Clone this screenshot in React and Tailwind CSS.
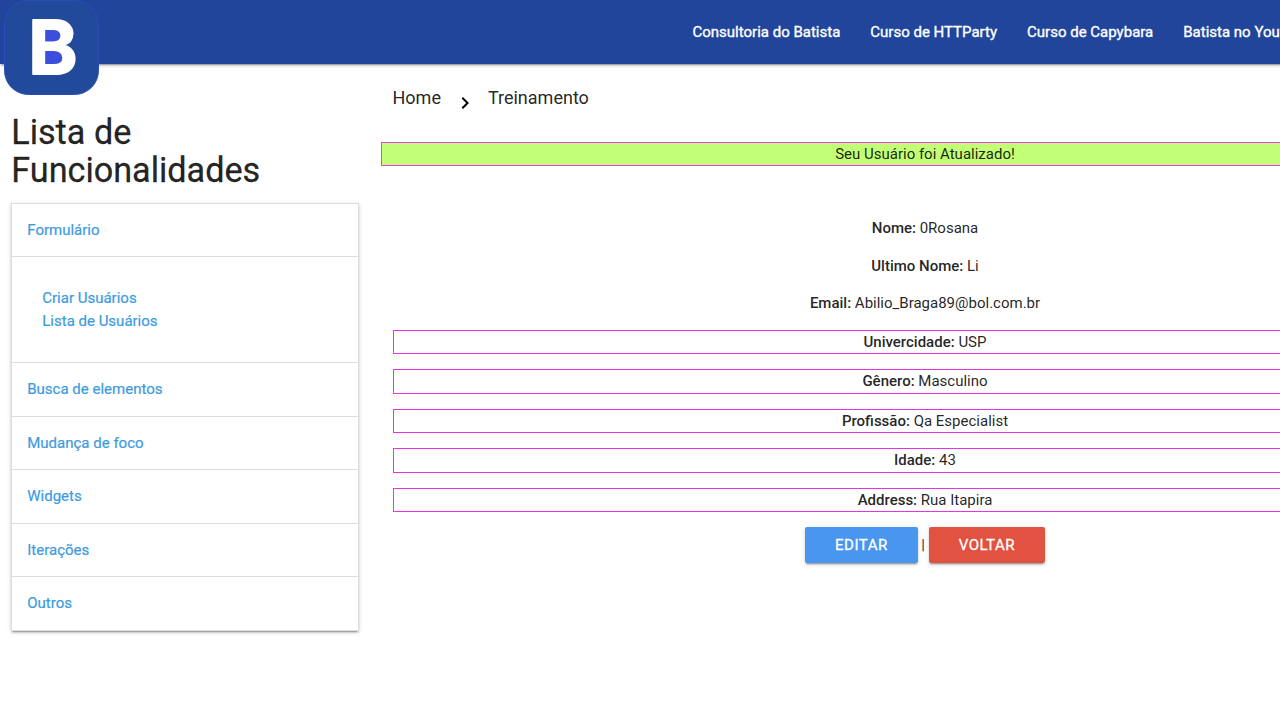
const navLinks = ["Consultoria do Batista", "Curso de HTTParty", "Curso de Capybara", "Batista no You"];

const menu = [
  { title: "Formulário", links: ["Criar Usuários", "Lista de Usuários"] },
  { title: "Busca de elementos" },
  { title: "Mudança de foco" },
  { title: "Widgets" },
  { title: "Iterações" },
  { title: "Outros" },
];

const fields = [
  { label: "Nome:", value: "0Rosana" },
  { label: "Ultimo Nome:", value: "Li" },
  { label: "Email:", value: "Abilio_Braga89@bol.com.br" },
  { label: "Univercidade:", value: "USP", boxed: true },
  { label: "Gênero:", value: "Masculino", boxed: true },
  { label: "Profissão:", value: "Qa Especialist", boxed: true },
  { label: "Idade:", value: "43", boxed: true },
  { label: "Address:", value: "Rua Itapira", boxed: true },
];

const raised =
  "shadow-[0_2px_2px_0_rgba(0,0,0,0.14),0_1px_5px_0_rgba(0,0,0,0.12),0_3px_1px_-2px_rgba(0,0,0,0.2)]";

function Logo() {
  return (
    <svg className="absolute left-1 top-0" width="95" height="95" viewBox="0 0 95 95" aria-hidden="true">
      <rect x="0.5" y="0.5" width="94" height="94" rx="24" fill="#214a9b" stroke="#2a4cbd" />
      <rect x="37" y="27" width="22" height="16" fill="#3b4fdc" />
      <rect x="37" y="49" width="24" height="18" fill="#3b4fdc" />
      <text
        x="0"
        y="0"
        transform="translate(24.2 74.4)"
        fill="#fff"
        stroke="#fff"
        strokeWidth="1.8"
        strokeLinejoin="round"
        className="font-['Inter',sans-serif] text-[74.5px] font-bold"
      >
        B
      </text>
    </svg>
  );
}

function Header() {
  return (
    <header className={`relative h-16 bg-[#20459b] ${raised}`}>
      <nav className="flex h-16 items-center gap-[30px] pl-[692.5px] text-white [-webkit-text-stroke:0.35px_white]">
        {navLinks.map((label) => (
          <a key={label} className="whitespace-nowrap">{label}</a>
        ))}
      </nav>
      <Logo />
    </header>
  );
}

function Sidebar() {
  return (
    <aside className="w-[370px] shrink-0 px-[11.25px] pt-[50px]">
      <h4 className="text-[34.2px] leading-[37.62px] [-webkit-text-stroke:0.3px]">Lista de Funcionalidades</h4>
      <ul className={`mt-[13.5px] border border-b-0 border-[#ddd] text-[#3d9be0] [-webkit-text-stroke:0.2px] ${raised}`}>
        {menu.map((item) => (
          <li key={item.title}>
            <div className="border-b border-[#ddd] p-[15px]">{item.title}</div>
            {item.links && (
              <div className="flex flex-col border-b border-[#ddd] p-[30px]">
                {item.links.map((link) => (
                  <a key={link}>{link}</a>
                ))}
              </div>
            )}
          </li>
        ))}
      </ul>
    </aside>
  );
}

function Button({ className, children }) {
  return (
    <button className={`h-9 rounded-[2px] px-[30px] tracking-[0.5px] text-white uppercase [-webkit-text-stroke:0.3px] ${raised} ${className}`}>
      {children}
    </button>
  );
}

function Content() {
  return (
    <main className="w-[1110px] shrink-0 px-[11.25px] pt-[19.75px]">
      <div className="flex h-[58px] px-[11.25px] text-[18px] leading-[27px]">
        <a>Home</a>
        <svg className="mt-[7px] mr-[11px] ml-[12px]" width="24" height="24" viewBox="0 0 24 24" fill="#000">
          <path d="M10 6 8.59 7.41 13.17 12l-4.58 4.59L10 18l6-6z" />
        </svg>
        <a>Treinamento</a>
      </div>
      <div className="border border-[#e83fe8] bg-[#c3ff76] text-center">Seu Usuário foi Atualizado!</div>
      <div className="mt-[51px] flex flex-col gap-[15px] px-[11.25px] text-center">
        {fields.map((f) => (
          <p key={f.label} className={f.boxed ? "border border-[#e832e8]" : ""}>
            <span className="font-medium">{f.label}</span> {f.value}
          </p>
        ))}
        <div className="flex items-center justify-center">
          <Button className="bg-[#4896ef]">Editar</Button>
          <span className="mx-[3.7px]">|</span>
          <Button className="bg-[#e15241]">Voltar</Button>
        </div>
      </div>
    </main>
  );
}

export default function App() {
  return (
    <div className="h-screen w-full overflow-hidden bg-white font-['Roboto',sans-serif] text-[15px] leading-[22.5px] text-[rgba(0,0,0,0.87)]">
      <div className="w-[1480px]">
        <Header />
        <div className="flex">
          <Sidebar />
          <Content />
        </div>
      </div>
    </div>
  );
}
